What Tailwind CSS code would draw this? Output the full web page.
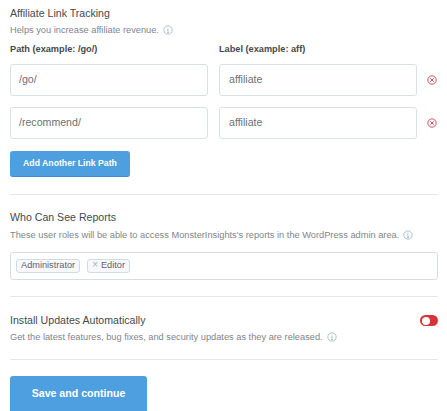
<!DOCTYPE html>
<html lang="en">
<head>
<meta charset="utf-8"/>
<title>Settings</title>
<script src="https://cdn.jsdelivr.net/npm/@tailwindcss/browser@4"></script>
</head>
<body class="bg-white font-['Liberation_Sans',Arial,sans-serif] overflow-hidden">
<main class="w-[447px] h-[411px] overflow-hidden pl-[10px] pr-[9px] pt-[6px]">
  <!-- affiliate links -->
  <section class="border-b border-[#e4e8ea] pb-[17px]">
    <h2 class="text-[10.6px] leading-[14px] text-[#45494e]">Affiliate Link Tracking</h2>
    <p class="flex items-center gap-[4px] mt-[4px] text-[9.25px] leading-[12px] text-[#7f858b]">
      Helps you increase affiliate revenue.
      <svg class="w-[10px] h-[10px]" viewBox="0 0 12 12" fill="none" stroke="#9db4c6"><circle cx="6" cy="6" r="5"/><path d="M6 5.2V9M5 9h2M5 5.2h1M6 3v.9"/></svg>
    </p>
    <div class="flex gap-[11px] mt-[7px] text-[9.2px] leading-[12px] font-bold text-[#45494e]">
      <label class="w-[198px]">Path (example: /go/)</label>
      <label class="w-[198px]">Label (example: aff)</label>
    </div>
    <div class="flex items-center gap-[11px] mt-[9px]">
      <div class="w-[198px] h-[32px] flex items-center px-[8px] border border-[#d6e2e6] rounded-[3px] text-[10.6px] text-[#6b7075]">/go/</div>
      <div class="w-[198px] h-[32px] flex items-center px-[9px] border border-[#d6e2e6] rounded-[3px] text-[10.6px] text-[#6b7075]">affiliate</div>
      <svg class="w-[10px] h-[10px] ml-[-1px]" viewBox="0 0 12 12" fill="none" stroke="#d0545c" stroke-width="1.2"><circle cx="6" cy="6" r="5"/><path d="M4 4l4 4M8 4l-4 4"/></svg>
    </div>
    <div class="flex items-center gap-[11px] mt-[11px]">
      <div class="w-[198px] h-[32px] flex items-center px-[8px] border border-[#d6e2e6] rounded-[3px] text-[10.6px] text-[#6b7075]">/recommend/</div>
      <div class="w-[198px] h-[32px] flex items-center px-[9px] border border-[#d6e2e6] rounded-[3px] text-[10.6px] text-[#6b7075]">affiliate</div>
      <svg class="w-[10px] h-[10px] ml-[-1px]" viewBox="0 0 12 12" fill="none" stroke="#d0545c" stroke-width="1.2"><circle cx="6" cy="6" r="5"/><path d="M4 4l4 4M8 4l-4 4"/></svg>
    </div>
    <button class="block w-[120px] h-[26px] mt-[12px] rounded-[3px] bg-[#4d9fe0] border-b border-[#3d8ccb] text-[8.7px] font-bold text-white">Add Another Link Path</button>
  </section>

  <!-- reports access -->
  <section class="border-b border-[#e4e8ea] pt-[15px] pb-[16px]">
    <h2 class="text-[10.6px] leading-[14px] text-[#45494e]">Who Can See Reports</h2>
    <p class="flex items-center gap-[4px] mt-[5px] text-[9.25px] leading-[12px] text-[#7f858b]">
      These user roles will be able to access MonsterInsights's reports in the WordPress admin area.
      <svg class="w-[10px] h-[10px]" viewBox="0 0 12 12" fill="none" stroke="#9db4c6"><circle cx="6" cy="6" r="5"/><path d="M6 5.2V9M5 9h2M5 5.2h1M6 3v.9"/></svg>
    </p>
    <div class="flex items-center gap-[7px] h-[28px] mt-[11px] px-[5px] border border-[#d6dde0] rounded-[3px] text-[9.2px] text-[#5f6469]">
      <span class="h-[14px] flex items-center px-[4px] border border-[#cfdbe6] rounded-[3px] bg-[#f6f8fb]">Administrator</span>
      <span class="h-[14px] flex items-center gap-[3px] px-[4px] border border-[#cfdbe6] rounded-[3px] bg-[#f6f8fb]"><span class="text-[10px] text-[#a7b0b8] leading-none mt-[-3px]">×</span>Editor</span>
    </div>
  </section>

  <!-- auto updates -->
  <section class="relative border-b border-[#e4e8ea] pt-[16px] pb-[16px]">
    <h2 class="text-[10.6px] leading-[14px] text-[#45494e]">Install Updates Automatically</h2>
    <p class="flex items-center gap-[4px] mt-[4px] text-[9.25px] leading-[12px] text-[#7f858b]">
      Get the latest features, bug fixes, and security updates as they are released.
      <svg class="w-[10px] h-[10px]" viewBox="0 0 12 12" fill="none" stroke="#9db4c6"><circle cx="6" cy="6" r="5"/><path d="M6 5.2V9M5 9h2M5 5.2h1M6 3v.9"/></svg>
    </p>
    <div class="absolute right-0 top-[18px] w-[18px] h-[11px] rounded-full bg-[#d9333a] flex items-center pl-[2px]">
      <span class="w-[8px] h-[8px] rounded-full bg-white"></span>
    </div>
  </section>

  <button class="block w-[137px] h-[35px] mt-[16px] rounded-t-[3px] bg-[#4d9fe0] text-[10.6px] font-bold text-white">Save and continue</button>
</main>
</body>
</html>
